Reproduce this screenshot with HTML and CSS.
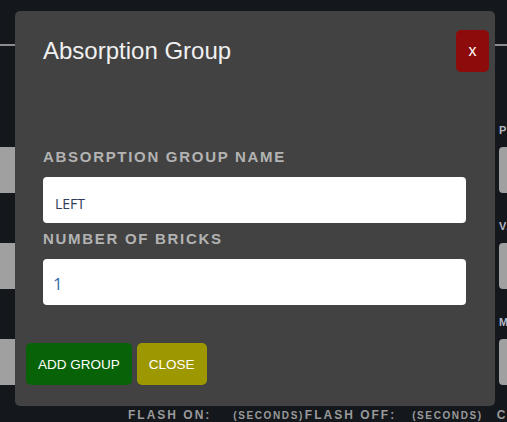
FILE: index.html
```html
<!DOCTYPE html>
<html lang="en">
<head>
<meta charset="utf-8">
<title>Absorption Group</title>
<link rel="stylesheet" href="styles.css">
</head>
<body>
<div class="page">
  <header class="topbar"></header>
  <main class="form">
    <div class="col col-left">
      <div class="ghost-input"></div>
      <div class="ghost-input"></div>
      <div class="ghost-input"></div>
    </div>
    <div class="col col-mid"></div>
    <div class="col col-right">
      <div class="field"><span class="field-label">POSITION</span><div class="ghost-input"></div></div>
      <div class="field"><span class="field-label">VALUE</span><div class="ghost-input"></div></div>
      <div class="field"><span class="field-label">MODE</span><div class="ghost-input"></div></div>
    </div>
    <div class="timing">
      <span class="t-label">FLASH ON:</span>
      <span class="t-unit first">(SECONDS)</span>
      <span class="t-label second">FLASH OFF:</span>
      <span class="t-unit second">(SECONDS)</span>
      <span class="t-label third">COLOR</span>
    </div>
  </main>
</div>

<div class="modal">
  <div class="modal-header">
    <h2 class="modal-title">Absorption Group</h2>
    <button class="btn-x">x</button>
  </div>
  <div class="modal-body">
    <label class="m-label">Absorption Group Name</label>
    <input class="m-input text" type="text" value="LEFT">
    <label class="m-label second">Number of Bricks</label>
    <input class="m-input num" type="text" value="1">
  </div>
  <div class="modal-footer">
    <button class="btn btn-add">ADD GROUP</button>
    <button class="btn btn-close">CLOSE</button>
  </div>
</div>
</body>
</html>
```

FILE: styles.css
```css
html, body {
  margin: 0;
  padding: 0;
}
body {
  width: 507px;
  height: 422px;
  overflow: hidden;
  background: #14181d;
  font-family: "Liberation Sans", Arial, sans-serif;
  position: relative;
}
.page {
  width: 507px;
}
.topbar {
  height: 44px;
  border-bottom: 2px solid #8c8c8c;
}
.form {
  display: grid;
  grid-template-columns: 110px 371px 200px;
  column-gap: 9px;
  padding-top: 77px;
  width: 708px;
}
.col-left {
  display: flex;
  flex-direction: column;
  gap: 50px;
  padding-top: 24px;
}
.col-right {
  display: flex;
  flex-direction: column;
  gap: 26px;
}
.field {
  display: flex;
  flex-direction: column;
  gap: 10px;
}
.field-label {
  font-size: 11px;
  line-height: 14px;
  font-weight: bold;
  letter-spacing: 1px;
  color: #b5b9c6;
  white-space: nowrap;
}
.ghost-input {
  height: 46px;
  background: #a0a0a0;
  border-radius: 4px;
}
.col-left .ghost-input {
  border-radius: 0 4px 4px 0;
}
.timing {
  grid-column: 1 / -1;
  display: flex;
  align-items: baseline;
  padding-left: 128px;
  margin-top: 23px;
  line-height: 14px;
  color: #9a9a9a;
  font-weight: bold;
  white-space: nowrap;
}
.t-label {
  font-size: 12px;
  letter-spacing: 2px;
}
.t-unit {
  font-size: 10px;
  letter-spacing: 1.6px;
}
.t-unit.first { margin-left: 22px; }
.t-label.second { margin-left: 1px; }
.t-unit.second { margin-left: 16px; }
.t-label.third { margin-left: 14px; }

/* modal */
.modal {
  position: absolute;
  left: 15px;
  top: 11px;
  width: 480px;
  background: #424242;
  border-radius: 5px;
  padding-bottom: 21px;
}
.modal-header {
  display: flex;
  align-items: center;
  justify-content: space-between;
  margin-top: 19px;
  padding: 0 6px 0 28px;
}
.modal-title {
  margin: 0;
  font-size: 24px;
  font-weight: normal;
  line-height: 28px;
  color: #f0f0f0;
}
.btn-x {
  width: 33px;
  height: 42px;
  border: none;
  border-radius: 5px;
  background: #8e0b0b;
  color: #ffffff;
  font-family: "Liberation Sans", Arial, sans-serif;
  font-size: 16px;
  padding: 0;
}
.modal-body {
  display: flex;
  flex-direction: column;
  padding: 0 29px 0 28px;
  margin-top: 76px;
}
.m-label {
  font-size: 15px;
  line-height: 18px;
  font-weight: bold;
  letter-spacing: 1.7px;
  text-transform: uppercase;
  color: #b3b3b3;
  margin-bottom: 11px;
}
.m-label.second {
  margin-top: 7px;
}
.m-input {
  box-sizing: border-box;
  width: 100%;
  height: 46px;
  border: none;
  border-radius: 4px;
  background: #ffffff;
  padding: 0 12px;
  font-family: "Open Sans", "Noto Sans", sans-serif;
  margin: 0;
}
.m-input.text {
  font-size: 14px;
  padding-top: 7px;
  color: #2f3b58;
}
.m-input.num {
  font-size: 17px;
  padding-top: 2px;
  padding-left: 10px;
  color: #3a6ba6;
}
.modal-footer {
  display: flex;
  gap: 5px;
  padding: 0 11px;
  margin-top: 38px;
}
.btn {
  height: 42px;
  padding: 0 12px;
  border: none;
  border-radius: 5px;
  color: #ffffff;
  font-family: "Liberation Sans", Arial, sans-serif;
  font-size: 13.5px;
}
.btn-add {
  background: #086308;
}
.btn-close {
  background: #9e9800;
}
```
